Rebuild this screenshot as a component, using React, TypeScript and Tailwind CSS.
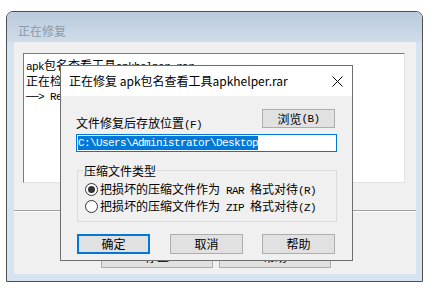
import React from "react";

// Latin text in the old dialog font: half-width, 6px per glyph
const M = ({ children }: { children: React.ReactNode }) => (
  <span className="font-['Liberation_Mono',monospace] text-[11px] tracking-[-0.6px]">{children}</span>
);

const Radio = ({ checked }: { checked?: boolean }) => (
  <span className="flex h-[13px] w-[13px] items-center justify-center rounded-full border border-[#333333] bg-white">
    {checked && <span className="h-[7px] w-[7px] rounded-full bg-[#333333]" />}
  </span>
);

export default function App() {
  return (
    <div className="relative h-[300px] w-[433px] overflow-hidden bg-white font-['Noto_Sans_CJK_SC',sans-serif] text-[12px] text-black">
      {/* 背后的 "正在修复" 窗口 */}
      <div className="absolute left-[6px] top-[11px] flex h-[271px] w-[417px] flex-col rounded-t-[7px] border border-[#4f4f4f] bg-[#d6e3f1]">
        <div className="flex h-[30px] shrink-0 items-center rounded-t-[6px] bg-gradient-to-b from-[#bacbdd] to-[#cfdcea] pl-[11px] pt-[8px] leading-[14px] text-[#8d99a6]">
          正在修复
        </div>
        <div className="ml-[7px] mr-[6px] flex h-[232px] flex-col bg-[#f0f0f0]">
          <div className="ml-[9px] mt-[11px] h-[130px] w-[382px] border border-b-[#e3e3e3] border-l-[#7a7a7a] border-r-[#e3e3e3] border-t-[#7a7a7a] bg-white pl-[2px] pt-[4px] leading-[14px]">
            <div className="whitespace-nowrap">
              <M>apk</M>包名查看工具<M>apkhelper.rar</M>
            </div>
            <div className="whitespace-nowrap">正在检查</div>
            <div className="whitespace-nowrap">
              <M>──&gt; Re</M>
            </div>
          </div>
          <div className="mt-[27px] h-[2px] border-b border-t border-b-white border-t-[#a0a0a0]" />
          <div className="ml-[87px] mt-[33px] flex gap-[6px]">
            <div className="flex h-[23px] w-[112px] items-center justify-center border border-[#adadad] bg-[#e1e1e1]">停止</div>
            <div className="flex h-[23px] w-[112px] items-center justify-center border border-[#adadad] bg-[#e1e1e1]">帮助</div>
          </div>
        </div>
      </div>

      {/* 前面的修复对话框 */}
      <div className="absolute left-[60px] top-[65px] flex h-[196px] w-[293px] flex-col border border-[#6e6e6e] bg-[#f0f0f0]">
        <div className="flex h-[30px] shrink-0 items-center justify-between bg-white pl-[8px] pr-[9px]">
          <span className="whitespace-nowrap leading-[14px]">正在修复 apk包名查看工具apkhelper.rar</span>
          <svg width="11" height="11" viewBox="0 0 11 11">
            <path d="M0.5 0.5L10.5 10.5M10.5 0.5L0.5 10.5" stroke="#000" strokeWidth="1" />
          </svg>
        </div>
        <div className="flex flex-col px-[15px] pt-[13px]">
          <div className="flex items-start justify-between">
            <span className="mt-[7px] whitespace-nowrap leading-[14px]">
              文件修复后存放位置<M>(F)</M>
            </span>
            <div className="mr-[2px] flex h-[19px] w-[73px] items-center justify-center border border-[#adadad] bg-[#e1e1e1] leading-[14px]">
              浏览<M>(B)</M>
            </div>
          </div>
          <div className="mt-[2px] flex h-[18px] items-start border border-[#0078d7] bg-white pl-[1px] pt-[1px]">
            <span className="bg-[#0078d7] font-['Liberation_Mono',monospace] text-[11px] leading-[14px] tracking-[-0.6px] text-white">
              C:\Users\Administrator\Desktop
            </span>
          </div>
          <div className="relative ml-[1px] mt-[18px] h-[52px] border border-[#dcdcdc] pt-[10px]">
            <span className="absolute -top-[7px] left-[5px] bg-[#f0f0f0] px-[1px] leading-[14px]">压缩文件类型</span>
            <div className="flex h-[17px] items-center gap-[2px] pl-[7px] whitespace-nowrap">
              <Radio checked />
              <span className="leading-[14px]">
                把损坏的压缩文件作为<M> RAR </M>格式对待<M>(R)</M>
              </span>
            </div>
            <div className="flex h-[17px] items-center gap-[2px] pl-[7px] whitespace-nowrap">
              <Radio />
              <span className="leading-[14px]">
                把损坏的压缩文件作为<M> ZIP </M>格式对待<M>(Z)</M>
              </span>
            </div>
          </div>
          <div className="ml-[1px] mt-[12px] flex">
            <div className="flex h-[20px] w-[73px] items-center justify-center border-2 border-[#0078d7] bg-[#e1e1e1] leading-[14px]">确定</div>
            <div className="ml-[20px] flex h-[20px] w-[73px] items-center justify-center border border-[#adadad] bg-[#e1e1e1] leading-[14px]">取消</div>
            <div className="ml-[19px] flex h-[20px] w-[73px] items-center justify-center border border-[#adadad] bg-[#e1e1e1] leading-[14px]">帮助</div>
          </div>
        </div>
      </div>
    </div>
  );
}
